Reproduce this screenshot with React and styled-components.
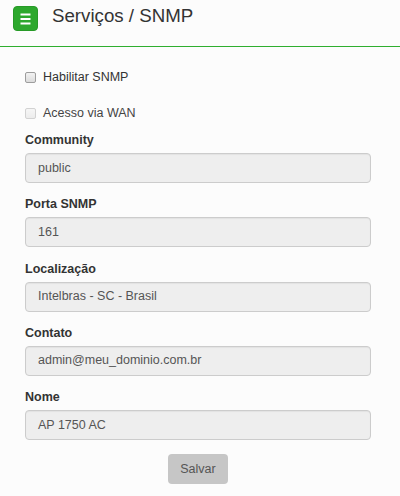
import React from "react";
import styled, { createGlobalStyle } from "styled-components";

const Global = createGlobalStyle`
  html, body { margin: 0; padding: 0; background: #fcfcfc; }
  body { font-family: "Liberation Sans", Arial, sans-serif; color: #333; }
  * { box-sizing: border-box; }
`;

const Header = styled.header`
  display: flex;
  align-items: flex-start;
  height: 47px;
  padding: 0 13px;
  border-bottom: 1px solid #2fae2f;
`;

const MenuButton = styled.div`
  width: 25px;
  height: 25px;
  margin-top: 6px;
  border-radius: 4px;
  background: #2da82d;
  border: 1px solid #279a27;
  display: flex;
  align-items: center;
  justify-content: center;
`;

const Title = styled.h1`
  margin: 5px 0 0 14px;
  font-size: 18.7px;
  line-height: 22px;
  font-weight: normal;
  color: #333;
`;

const Form = styled.form`
  padding: 21px 29px 0 25px;
  display: flex;
  flex-direction: column;
`;

const CheckRow = styled.label`
  display: flex;
  align-items: center;
  height: 18px;
  font-size: 12.5px;
  color: ${(p) => (p.$disabled ? "#444" : "#333")};
  margin-bottom: ${(p) => p.$mb}px;
`;

const Box = styled.span`
  width: 11px;
  height: 11px;
  margin-right: 7px;
  border-radius: 2px;
  border: 1px solid ${(p) => (p.$disabled ? "#d2d2d2" : "#9d9d9d")};
  background: ${(p) =>
    p.$disabled
      ? "linear-gradient(#f6f6f6, #ececec)"
      : "linear-gradient(#f2f2f2, #dcdcdc)"};
`;

const Group = styled.div`
  display: flex;
  flex-direction: column;
  margin-bottom: 11.25px;
`;

const Label = styled.label`
  font-size: 12.5px;
  font-weight: bold;
  line-height: 18px;
  padding-top: 1px;
  margin-bottom: 4px;
  color: #333;
`;

const Input = styled.div`
  height: 30px;
  padding: 0 12px 1px;
  display: flex;
  align-items: center;
  font-size: 12.5px;
  color: #555;
  background: #eeeeee;
  border: 1px solid #cccccc;
  border-radius: 4px;
  box-shadow: inset 0 1px 1px rgba(0, 0, 0, 0.05);
`;

const Actions = styled.div`
  display: flex;
  justify-content: center;
  margin-top: 2.75px;
`;

const Button = styled.button`
  height: 30px;
  padding: 0 12px;
  font-family: "Liberation Sans", Arial, sans-serif;
  font-size: 12.5px;
  color: #555;
  background: #c6c6c6;
  border: none;
  border-radius: 4px;
`;

const fields = [
  ["Community", "public"],
  ["Porta SNMP", "161"],
  ["Localização", "Intelbras - SC - Brasil"],
  ["Contato", "admin@meu_dominio.com.br"],
  ["Nome", "AP 1750 AC"],
];

export default function App() {
  return (
    <>
      <Global />
      <Header>
        <MenuButton>
          <svg width="11" height="12" viewBox="0 0 11 12">
            <rect x="0.5" y="0.5" width="10" height="2" fill="#fff" />
            <rect x="0.5" y="5" width="10" height="2" fill="#fff" />
            <rect x="0.5" y="9.5" width="10" height="2" fill="#fff" />
          </svg>
        </MenuButton>
        <Title>Serviços / SNMP</Title>
      </Header>
      <Form onSubmit={(e) => e.preventDefault()}>
        <CheckRow $mb={18}>
          <Box />
          Habilitar SNMP
        </CheckRow>
        <CheckRow $mb={8} $disabled>
          <Box $disabled />
          Acesso via WAN
        </CheckRow>
        {fields.map(([label, value]) => (
          <Group key={label}>
            <Label>{label}</Label>
            <Input>{value}</Input>
          </Group>
        ))}
        <Actions>
          <Button type="button">Salvar</Button>
        </Actions>
      </Form>
    </>
  );
}
